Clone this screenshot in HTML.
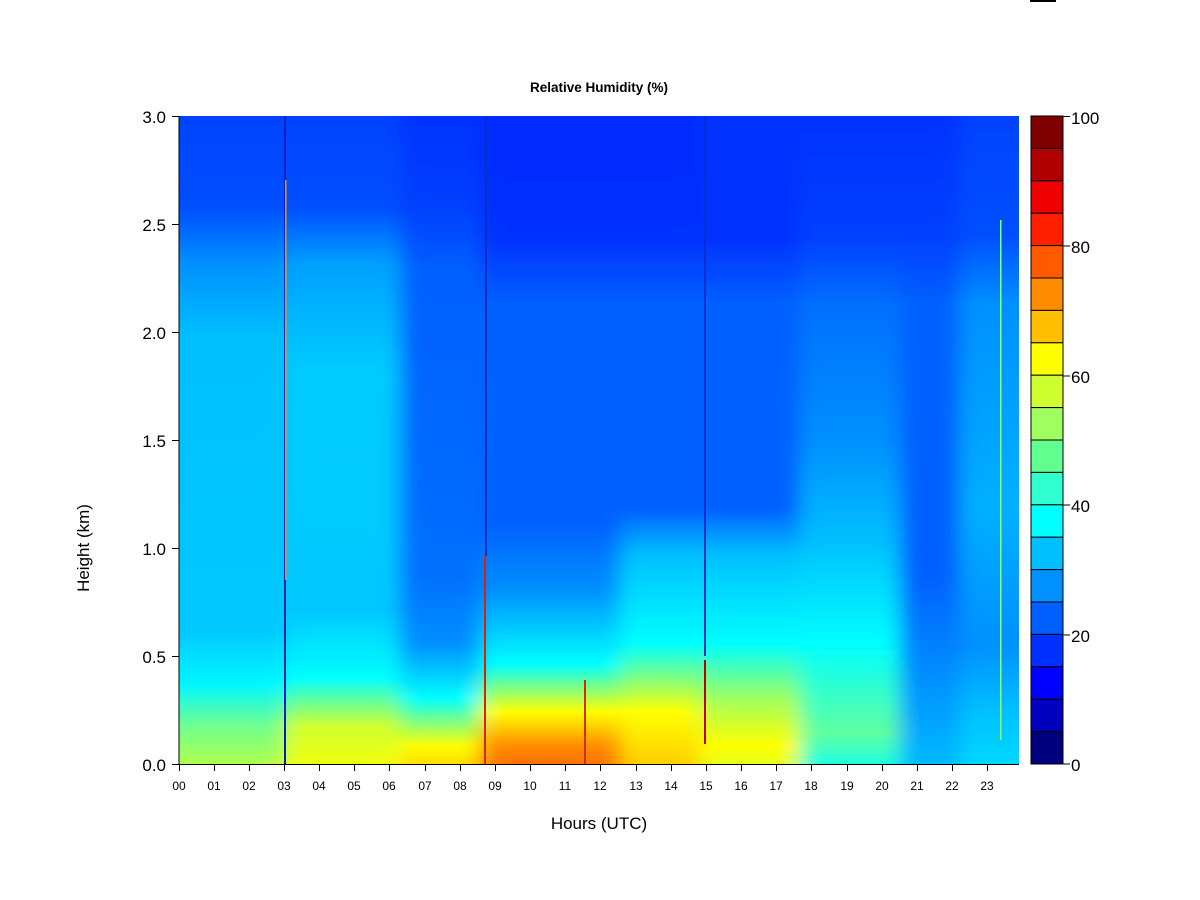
<!DOCTYPE html>
<html><head><style>
body{margin:0;background:#fff;width:1200px;height:900px;overflow:hidden}
svg{display:block}
text{font-family:"Liberation Sans",Arial,sans-serif}
</style></head><body>
<svg width="1200" height="900" viewBox="0 0 1200 900">
<defs>
<filter id="b" x="-5%" y="-5%" width="110%" height="110%"><feGaussianBlur stdDeviation="10 2"/></filter>
<linearGradient id="A" x1="0" y1="0" x2="0" y2="1"><stop offset="0" stop-color="#0040ff"/><stop offset=".16" stop-color="#0050ff"/><stop offset=".24" stop-color="#0090ff"/><stop offset=".35" stop-color="#00c0ff"/><stop offset=".78" stop-color="#00c8ff"/><stop offset=".86" stop-color="#00f8ff"/><stop offset=".92" stop-color="#70ff90"/><stop offset="1" stop-color="#c8ff30"/></linearGradient>
<linearGradient id="B" x1="0" y1="0" x2="0" y2="1"><stop offset="0" stop-color="#0040ff"/><stop offset=".16" stop-color="#0050ff"/><stop offset=".24" stop-color="#00a0ff"/><stop offset=".4" stop-color="#00ccff"/><stop offset=".75" stop-color="#00c8ff"/><stop offset=".85" stop-color="#00ffff"/><stop offset=".92" stop-color="#d0ff30"/><stop offset="1" stop-color="#ffff00"/></linearGradient>
<linearGradient id="C" x1="0" y1="0" x2="0" y2="1"><stop offset="0" stop-color="#0030ff"/><stop offset=".16" stop-color="#0040ff"/><stop offset=".25" stop-color="#0060ff"/><stop offset=".7" stop-color="#0070ff"/><stop offset=".8" stop-color="#0090ff"/><stop offset=".88" stop-color="#00ffff"/><stop offset=".95" stop-color="#ffff00"/><stop offset="1" stop-color="#ffbf00"/></linearGradient>
<linearGradient id="D" x1="0" y1="0" x2="0" y2="1"><stop offset="0" stop-color="#0028ff"/><stop offset=".2" stop-color="#0030ff"/><stop offset=".3" stop-color="#0060ff"/><stop offset=".62" stop-color="#0060ff"/><stop offset=".72" stop-color="#0090ff"/><stop offset=".83" stop-color="#00ffff"/><stop offset=".9" stop-color="#ffff00"/><stop offset=".95" stop-color="#ff8c00"/><stop offset="1" stop-color="#ff5a00"/></linearGradient>
<linearGradient id="E" x1="0" y1="0" x2="0" y2="1"><stop offset="0" stop-color="#0028ff"/><stop offset=".2" stop-color="#0030ff"/><stop offset=".3" stop-color="#0060ff"/><stop offset=".6" stop-color="#0060ff"/><stop offset=".67" stop-color="#00c0ff"/><stop offset=".8" stop-color="#00ffff"/><stop offset=".9" stop-color="#ffff00"/><stop offset="1" stop-color="#ffbf00"/></linearGradient>
<linearGradient id="F" x1="0" y1="0" x2="0" y2="1"><stop offset="0" stop-color="#0030ff"/><stop offset=".2" stop-color="#0030ff"/><stop offset=".3" stop-color="#0060ff"/><stop offset=".6" stop-color="#0060ff"/><stop offset=".67" stop-color="#00c0ff"/><stop offset=".8" stop-color="#00ffff"/><stop offset=".88" stop-color="#a0ff60"/><stop offset=".95" stop-color="#ffff00"/><stop offset="1" stop-color="#d0ff30"/></linearGradient>
<linearGradient id="G" x1="0" y1="0" x2="0" y2="1"><stop offset="0" stop-color="#0030ff"/><stop offset=".2" stop-color="#0040ff"/><stop offset=".3" stop-color="#0070ff"/><stop offset=".5" stop-color="#0090ff"/><stop offset=".65" stop-color="#00c0ff"/><stop offset=".8" stop-color="#00ffff"/><stop offset=".93" stop-color="#60ffa0"/><stop offset="1" stop-color="#00ffff"/></linearGradient>
<linearGradient id="H" x1="0" y1="0" x2="0" y2="1"><stop offset="0" stop-color="#0030ff"/><stop offset=".2" stop-color="#0040ff"/><stop offset=".3" stop-color="#0060ff"/><stop offset=".7" stop-color="#0060ff"/><stop offset=".85" stop-color="#0090ff"/><stop offset="1" stop-color="#00c0ff"/></linearGradient>
<linearGradient id="I" x1="0" y1="0" x2="0" y2="1"><stop offset="0" stop-color="#0040ff"/><stop offset=".2" stop-color="#0050ff"/><stop offset=".3" stop-color="#0090ff"/><stop offset=".6" stop-color="#00b0ff"/><stop offset=".8" stop-color="#0090ff"/><stop offset=".9" stop-color="#00c0ff"/><stop offset="1" stop-color="#00e0ff"/></linearGradient>
<clipPath id="cp"><rect x="179" y="116" width="840" height="648"/></clipPath>
</defs>
<rect x="1030" y="0" width="26" height="2" fill="#000"/>
<text x="599" y="92" font-size="13.5" font-weight="bold" text-anchor="middle">Relative Humidity (%)</text>
<g clip-path="url(#cp)">
<g filter="url(#b)">
<rect x="150" y="100" width="135" height="680" fill="url(#A)"/>
<rect x="285" y="100" width="115" height="680" fill="url(#B)"/>
<rect x="400" y="100" width="80" height="680" fill="url(#C)"/>
<rect x="480" y="100" width="140" height="680" fill="url(#D)"/>
<rect x="620" y="100" width="80" height="680" fill="url(#E)"/>
<rect x="700" y="100" width="100" height="680" fill="url(#F)"/>
<rect x="800" y="100" width="100" height="680" fill="url(#G)"/>
<rect x="900" y="100" width="60" height="680" fill="url(#H)"/>
<rect x="960" y="100" width="80" height="680" fill="url(#I)"/>
</g>
<rect x="284" y="116" width="2" height="648" fill="#0020c0"/>
<rect x="285" y="180" width="1.5" height="400" fill="#ff9000"/>
<rect x="485" y="116" width="2" height="440" fill="#0030c0"/>
<rect x="484" y="556" width="2" height="208" fill="#e02000"/>
<rect x="704" y="116" width="2" height="540" fill="#0030d0"/>
<rect x="704" y="660" width="2" height="84" fill="#c00000"/>
<rect x="584" y="680" width="2" height="84" fill="#d03000"/>
<rect x="1000" y="220" width="1.5" height="520" fill="#80ff80"/>
</g>
<line x1="179" y1="116" x2="179" y2="764" stroke="#000"/>
<line x1="172" y1="116.5" x2="179" y2="116.5" stroke="#000"/>
<line x1="172" y1="224.5" x2="179" y2="224.5" stroke="#000"/>
<line x1="172" y1="332.5" x2="179" y2="332.5" stroke="#000"/>
<line x1="172" y1="440.5" x2="179" y2="440.5" stroke="#000"/>
<line x1="172" y1="548.5" x2="179" y2="548.5" stroke="#000"/>
<line x1="172" y1="656.5" x2="179" y2="656.5" stroke="#000"/>
<line x1="172" y1="764.5" x2="1019" y2="764.5" stroke="#000"/>
<g font-size="17" text-anchor="end">
<text x="166" y="123">3.0</text><text x="166" y="231">2.5</text><text x="166" y="339">2.0</text><text x="166" y="447">1.5</text><text x="166" y="555">1.0</text><text x="166" y="663">0.5</text><text x="166" y="771">0.0</text>
</g>
<g stroke="#000">
<line x1="179.5" y1="764" x2="179.5" y2="771"/><line x1="214.5" y1="764" x2="214.5" y2="771"/><line x1="249.5" y1="764" x2="249.5" y2="771"/><line x1="284.5" y1="764" x2="284.5" y2="771"/><line x1="319.5" y1="764" x2="319.5" y2="771"/><line x1="354.5" y1="764" x2="354.5" y2="771"/><line x1="389.5" y1="764" x2="389.5" y2="771"/><line x1="425.5" y1="764" x2="425.5" y2="771"/><line x1="460.5" y1="764" x2="460.5" y2="771"/><line x1="495.5" y1="764" x2="495.5" y2="771"/><line x1="530.5" y1="764" x2="530.5" y2="771"/><line x1="565.5" y1="764" x2="565.5" y2="771"/><line x1="600.5" y1="764" x2="600.5" y2="771"/><line x1="636.5" y1="764" x2="636.5" y2="771"/><line x1="671.5" y1="764" x2="671.5" y2="771"/><line x1="706.5" y1="764" x2="706.5" y2="771"/><line x1="741.5" y1="764" x2="741.5" y2="771"/><line x1="776.5" y1="764" x2="776.5" y2="771"/><line x1="811.5" y1="764" x2="811.5" y2="771"/><line x1="847.5" y1="764" x2="847.5" y2="771"/><line x1="882.5" y1="764" x2="882.5" y2="771"/><line x1="917.5" y1="764" x2="917.5" y2="771"/><line x1="952.5" y1="764" x2="952.5" y2="771"/><line x1="987.5" y1="764" x2="987.5" y2="771"/>
</g>
<g font-size="12" text-anchor="middle">
<text x="179" y="790">00</text><text x="214" y="790">01</text><text x="249" y="790">02</text><text x="284" y="790">03</text><text x="319" y="790">04</text><text x="354" y="790">05</text><text x="389" y="790">06</text><text x="425" y="790">07</text><text x="460" y="790">08</text><text x="495" y="790">09</text><text x="530" y="790">10</text><text x="565" y="790">11</text><text x="600" y="790">12</text><text x="636" y="790">13</text><text x="671" y="790">14</text><text x="706" y="790">15</text><text x="741" y="790">16</text><text x="776" y="790">17</text><text x="811" y="790">18</text><text x="847" y="790">19</text><text x="882" y="790">20</text><text x="917" y="790">21</text><text x="952" y="790">22</text><text x="987" y="790">23</text>
</g>
<text x="599" y="829" font-size="17" text-anchor="middle">Hours (UTC)</text>
<text transform="translate(89,548) rotate(-90)" font-size="17" text-anchor="middle">Height (km)</text>
<g stroke="#000" stroke-width="1">
<rect x="1031" y="116" width="32" height="32.4" fill="#800000"/>
<rect x="1031" y="148.4" width="32" height="32.4" fill="#b00000"/>
<rect x="1031" y="180.8" width="32" height="32.4" fill="#ee0000"/>
<rect x="1031" y="213.2" width="32" height="32.4" fill="#ff2000"/>
<rect x="1031" y="245.6" width="32" height="32.4" fill="#ff5a00"/>
<rect x="1031" y="278" width="32" height="32.4" fill="#ff8c00"/>
<rect x="1031" y="310.4" width="32" height="32.4" fill="#ffbf00"/>
<rect x="1031" y="342.8" width="32" height="32.4" fill="#ffff00"/>
<rect x="1031" y="375.2" width="32" height="32.4" fill="#cfff30"/>
<rect x="1031" y="407.6" width="32" height="32.4" fill="#9fff60"/>
<rect x="1031" y="440" width="32" height="32.4" fill="#60ff90"/>
<rect x="1031" y="472.4" width="32" height="32.4" fill="#30ffcf"/>
<rect x="1031" y="504.8" width="32" height="32.4" fill="#00ffff"/>
<rect x="1031" y="537.2" width="32" height="32.4" fill="#00c0ff"/>
<rect x="1031" y="569.6" width="32" height="32.4" fill="#0090ff"/>
<rect x="1031" y="602" width="32" height="32.4" fill="#0060ff"/>
<rect x="1031" y="634.4" width="32" height="32.4" fill="#0030ff"/>
<rect x="1031" y="666.8" width="32" height="32.4" fill="#0000ff"/>
<rect x="1031" y="699.2" width="32" height="32.4" fill="#0000bf"/>
<rect x="1031" y="731.6" width="32" height="32.4" fill="#00007f"/>
<line x1="1063" y1="116.5" x2="1070" y2="116.5"/><line x1="1063" y1="246" x2="1070" y2="246"/><line x1="1063" y1="376" x2="1070" y2="376"/><line x1="1063" y1="505" x2="1070" y2="505"/><line x1="1063" y1="635" x2="1070" y2="635"/><line x1="1063" y1="764" x2="1070" y2="764"/>
</g>
<g font-size="17">
<text x="1071" y="124">100</text><text x="1071" y="253">80</text><text x="1071" y="383">60</text><text x="1071" y="512">40</text><text x="1071" y="642">20</text><text x="1071" y="771">0</text>
</g>
</svg>
</body></html>
